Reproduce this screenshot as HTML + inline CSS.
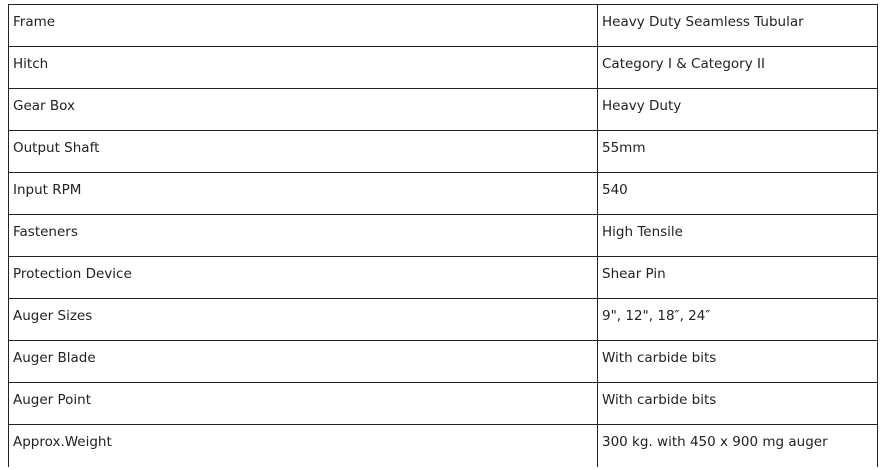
<!DOCTYPE html><html><head><style>
body{margin:0;background:#fff;width:880px;height:470px;overflow:hidden;font-family:"DejaVu Sans",Verdana,sans-serif;font-size:13.5px;color:#222}
table{position:absolute;left:8px;top:4px;border-collapse:collapse;width:870px}
td{border:1px solid #222;height:42px;padding:9px 0 0 4px;vertical-align:top;box-sizing:border-box;line-height:16px}
td:first-child{width:589px}
tr:last-child td{border-bottom:none}
</style></head><body><table>
<tr><td>Frame</td><td>Heavy Duty Seamless Tubular</td></tr>
<tr><td>Hitch</td><td>Category I &amp; Category II</td></tr>
<tr><td>Gear Box</td><td>Heavy Duty</td></tr>
<tr><td>Output Shaft</td><td>55mm</td></tr>
<tr><td>Input RPM</td><td>540</td></tr>
<tr><td>Fasteners</td><td>High Tensile</td></tr>
<tr><td>Protection Device</td><td>Shear Pin</td></tr>
<tr><td>Auger Sizes</td><td>9", 12", 18″, 24″</td></tr>
<tr><td>Auger Blade</td><td>With carbide bits</td></tr>
<tr><td>Auger Point</td><td>With carbide bits</td></tr>
<tr><td>Approx.Weight</td><td>300 kg. with 450 x 900 mg auger</td></tr>
</table></body></html>
